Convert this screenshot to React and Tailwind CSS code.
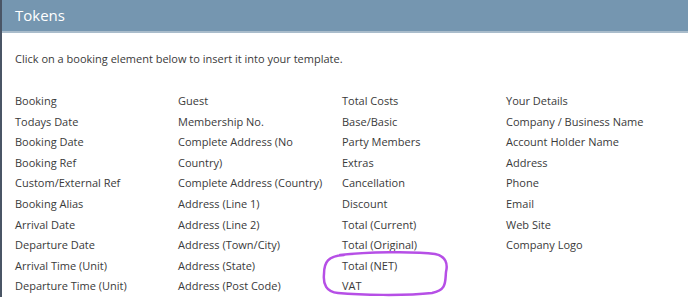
import React from "react";

const columns = [
  {
    title: "Booking",
    items: [
      "Todays Date",
      "Booking Date",
      "Booking Ref",
      "Custom/External Ref",
      "Booking Alias",
      "Arrival Date",
      "Departure Date",
      "Arrival Time (Unit)",
      "Departure Time (Unit)",
    ],
  },
  {
    title: "Guest",
    items: [
      "Membership No.",
      "Complete Address (No Country)",
      "Complete Address (Country)",
      "Address (Line 1)",
      "Address (Line 2)",
      "Address (Town/City)",
      "Address (State)",
      "Address (Post Code)",
    ],
  },
  {
    title: "Total Costs",
    items: [
      "Base/Basic",
      "Party Members",
      "Extras",
      "Cancellation",
      "Discount",
      "Total (Current)",
      "Total (Original)",
      "Total (NET)",
      "VAT",
    ],
  },
  {
    title: "Your Details",
    items: [
      "Company / Business Name",
      "Account Holder Name",
      "Address",
      "Phone",
      "Email",
      "Web Site",
      "Company Logo",
    ],
  },
];

// hand drawn highlight around the VAT tokens
const Highlight = () => (
  <svg
    className="absolute left-[318px] top-[250px] pointer-events-none"
    width="130"
    height="47"
    viewBox="0 0 130 47"
  >
    <path
      d="M20 5 C45 2 95 1 115 4 C126 6 128 14 126 22 C125 32 127 40 112 43 C85 46 40 45 18 43 C6 42 3 34 4 24 C4 12 8 6 24 5"
      fill="none"
      stroke="#b64fe6"
      strokeWidth="2.5"
      strokeLinecap="round"
    />
  </svg>
);

export default function App() {
  return (
    <div className="relative w-[688px] h-[297px] overflow-hidden bg-white border-l-2 border-gray-600 font-['Open_Sans',sans-serif]">
      <div className="h-[33px] bg-[#7596b0] border-b-2 border-[#a9bccb] flex items-center px-[13px]">
        <span className="text-white text-[15px]">Tokens</span>
      </div>
      <div className="px-[13px] pt-[18px] text-[#3a3a3a] text-[11px]">
        <p className="leading-[16px]">Click on a booking element below to insert it into your template.</p>
        <div className="grid grid-cols-[163px_164px_164px_1fr] mt-[24px]">
          {columns.map((col) => (
            <div key={col.title} className="flex flex-col">
              <div className="leading-[20.6px]">{col.title}</div>
              {col.items.map((item) => (
                <div key={item} className="leading-[20.6px] pr-[10px]">
                  {item}
                </div>
              ))}
            </div>
          ))}
        </div>
      </div>
      <Highlight />
    </div>
  );
}
